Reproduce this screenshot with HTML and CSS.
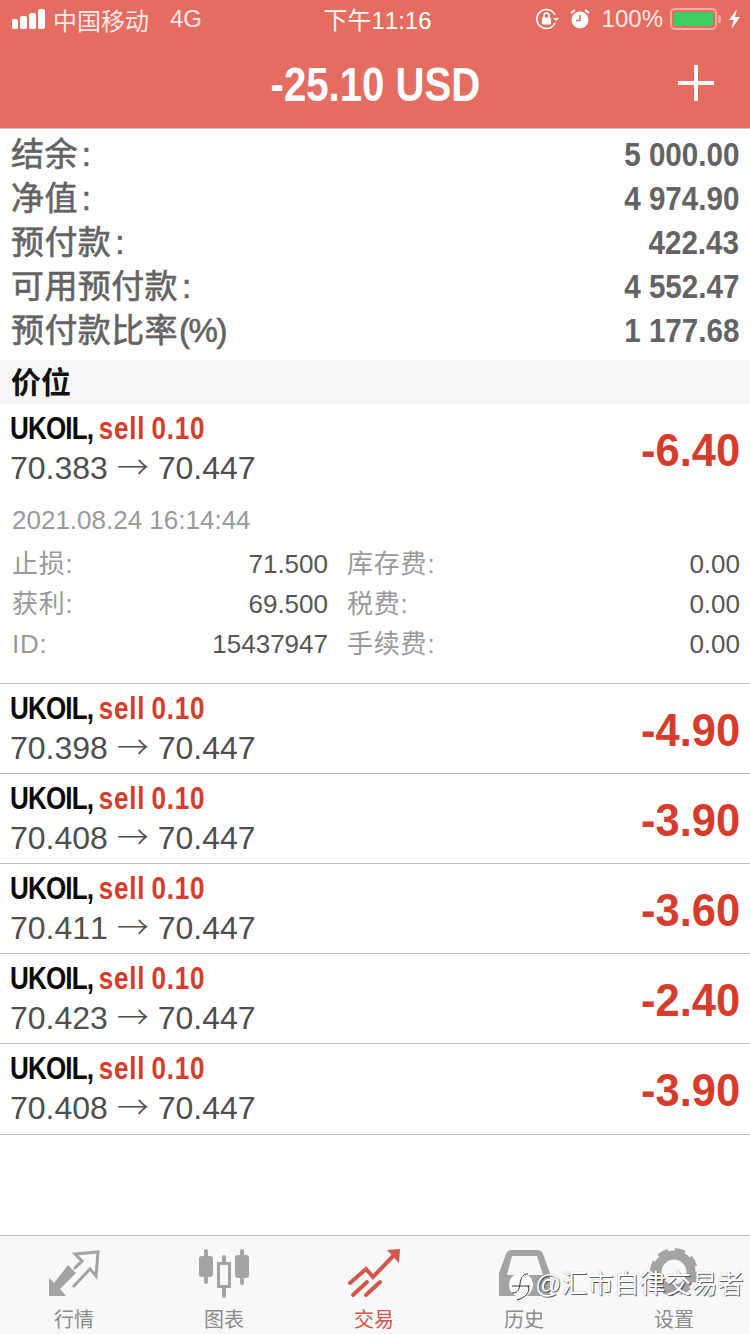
FILE: index.html
```html
<!DOCTYPE html>
<html lang="zh-CN">
<head>
<meta charset="utf-8">
<title>交易</title>
<link rel="stylesheet" href="styles.css">
</head>
<body>
<div class="screen">
  <header class="top">
    <div class="status">
      <div class="status-left">
        <svg class="signal" width="33" height="22" viewBox="0 0 33 22"><rect x="0" y="11" width="6" height="10" rx="2"/><rect x="8" y="8" width="7" height="13" rx="2"/><rect x="17" y="5" width="7" height="16" rx="2"/><rect x="26" y="1" width="7" height="20" rx="2"/></svg>
        <span class="carrier">中国移动</span><span class="net">4G</span>
      </div>
      <div class="clock">下午11:16</div>
      <div class="status-right">
        <svg width="24" height="24" viewBox="0 0 24 24"><path d="M20 8A9.500 9.500 0 1 0 20 16" fill="none" stroke="#fff" stroke-width="1.600"/><path d="M18 11h6l-3 3z" fill="#fff"/><rect x="7" y="10.500" width="9" height="7" rx="1" fill="#fff"/><path d="M9 11V8.500a2.500 2.500 0 0 1 5 0V11" fill="none" stroke="#fff" stroke-width="1.500"/></svg>
        <svg class="alarm" width="22" height="24" viewBox="0 0 22 24"><circle cx="11" cy="13" r="8.500" fill="#fff"/><path d="M11 8v5.500H7" fill="none" stroke="#e56c60" stroke-width="1.500"/><path d="M2 6l4-3M20 6l-4-3" stroke="#fff" stroke-width="2"/></svg>
        <span class="pct">100%</span>
        <span class="battery"><span class="battery-fill"></span></span>
        <svg width="13" height="22" viewBox="0 0 13 22"><path d="M9 1 1 12h4.500L3.500 21 12 9H7z" fill="#fff"/></svg>
      </div>
    </div>
    <div class="title-bar">
      <h1 class="title narrow">-25.10 USD</h1>
      <svg class="plus" width="38" height="38" viewBox="0 0 38 38"><path d="M19 1v36M1 19h36" stroke="#fff" stroke-width="4"/></svg>
    </div>
  </header>

  <section class="summary">
    <div class="sum-row"><span>结余<i class="colon">:</i></span><b class="narrow">5 000.00</b></div>
    <div class="sum-row"><span>净值<i class="colon">:</i></span><b class="narrow">4 974.90</b></div>
    <div class="sum-row"><span>预付款<i class="colon">:</i></span><b class="narrow">422.43</b></div>
    <div class="sum-row"><span>可用预付款<i class="colon">:</i></span><b class="narrow">4 552.47</b></div>
    <div class="sum-row"><span>预付款比率<i class="unit">(%)</i></span><b class="narrow">1 177.68</b></div>
  </section>

  <div class="section-head">价位</div>

  <section class="positions">
    <article class="pos open">
      <div class="pos-main">
        <div class="pos-text">
          <div class="pos-name narrow"><b>UKOIL,</b> <em>sell 0.10</em></div>
          <div class="pos-price">70.383 <span class="arrow">→</span> 70.447</div>
        </div>
        <div class="pos-pl narrow">-6.40</div>
      </div>
      <div class="pos-date">2021.08.24 16:14:44</div>
      <div class="pos-grid">
        <span class="k">止损:</span><span class="v">71.500</span><span class="k k2">库存费:</span><span class="v">0.00</span>
        <span class="k">获利:</span><span class="v">69.500</span><span class="k k2">税费:</span><span class="v">0.00</span>
        <span class="k">ID:</span><span class="v">15437947</span><span class="k k2">手续费:</span><span class="v">0.00</span>
      </div>
    </article>
    <article class="pos"><div class="pos-main"><div class="pos-text"><div class="pos-name narrow"><b>UKOIL,</b> <em>sell 0.10</em></div><div class="pos-price">70.398 <span class="arrow">→</span> 70.447</div></div><div class="pos-pl narrow">-4.90</div></div></article>
    <article class="pos"><div class="pos-main"><div class="pos-text"><div class="pos-name narrow"><b>UKOIL,</b> <em>sell 0.10</em></div><div class="pos-price">70.408 <span class="arrow">→</span> 70.447</div></div><div class="pos-pl narrow">-3.90</div></div></article>
    <article class="pos"><div class="pos-main"><div class="pos-text"><div class="pos-name narrow"><b>UKOIL,</b> <em>sell 0.10</em></div><div class="pos-price">70.411 <span class="arrow">→</span> 70.447</div></div><div class="pos-pl narrow">-3.60</div></div></article>
    <article class="pos"><div class="pos-main"><div class="pos-text"><div class="pos-name narrow"><b>UKOIL,</b> <em>sell 0.10</em></div><div class="pos-price">70.423 <span class="arrow">→</span> 70.447</div></div><div class="pos-pl narrow">-2.40</div></div></article>
    <article class="pos"><div class="pos-main"><div class="pos-text"><div class="pos-name narrow"><b>UKOIL,</b> <em>sell 0.10</em></div><div class="pos-price">70.408 <span class="arrow">→</span> 70.447</div></div><div class="pos-pl narrow">-3.90</div></div></article>
  </section>

  <nav class="tabs">
    <div class="tab">
      <svg width="50" height="50" viewBox="0 0 50 50"><path d="M0 29 5 34 19 16 27 24 11 40 17 47H0z" fill="#a3a3a3"/><path d="M24 38 41 20 47 27 49 3 26 5 33 12 25 20" fill="none" stroke="#a3a3a3" stroke-width="3"/></svg>
      <span>行情</span>
    </div>
    <div class="tab">
      <svg width="50" height="50" viewBox="0 0 50 50"><g fill="#a3a3a3"><rect x="0" y="7" width="14" height="21" rx="3"/><rect x="5" y="0" width="4" height="35" rx="2"/><rect x="36" y="6" width="14" height="23" rx="3"/><rect x="41" y="0" width="4" height="36" rx="2"/><rect x="23" y="6" width="4" height="43" rx="2"/></g><rect x="19.500" y="14.500" width="11" height="23" fill="#f8f8f8" stroke="#a3a3a3" stroke-width="3"/></svg>
      <span>图表</span>
    </div>
    <div class="tab active">
      <svg width="50" height="50" viewBox="0 0 50 50"><g fill="none" stroke="#d2564a" stroke-width="4" stroke-linecap="round"><path d="M1 34 17 20 24 28 47 4"/><path d="M4 46 18 33"/><path d="M17 46 31 33"/></g><path d="M38 1 51 0 50 14z" fill="#d2564a"/></svg>
      <span>交易</span>
    </div>
    <div class="tab">
      <svg width="51" height="50" viewBox="0 0 51 50"><path d="M0 47V24L7 5Q9 1 13 1H38Q42 1 44 5L51 24V47z" fill="#a3a3a3"/><path d="M8 26 13 7H38L44 26z" fill="#f8f8f8"/></svg>
      <span>历史</span>
    </div>
    <div class="tab">
      <svg class="gear" width="50" height="50" viewBox="0 0 50 50"><circle cx="25" cy="23" r="17" fill="none" stroke="#a3a3a3" stroke-width="9"/><circle cx="25" cy="23" r="22" fill="none" stroke="#a3a3a3" stroke-width="4" stroke-dasharray="10.500 6.780"/></svg>
      <span>设置</span>
    </div>
    <div class="mark">
      <svg class="mark-logo" width="27" height="30" viewBox="0 0 27 30"><circle cx="13" cy="13" r="12" fill="#fff"/><path d="M20 2C14 2 13 6 12 12S10 21 4 21M4 14H22M20 14C23 20 17 26 9 28" fill="none" stroke="#333" stroke-width="1"/></svg>
      <span class="mark-text">@汇市自律交易者</span>
    </div>
  </nav>
</div>
</body>
</html>
```
FILE: styles.css
```css
* { box-sizing: border-box; margin: 0; padding: 0; }
html, body { background: #fff; }
body {
  width: 750px;
  height: 1334px;
  overflow: hidden;
  font-family: "Liberation Sans", "Noto Sans CJK SC", sans-serif;
  font-kerning: none;
}
.screen { width: 750px; height: 1334px; display: flex; flex-direction: column; }

/* condensed bold numerals */
.narrow { font-weight: 700; display: inline-block; transform-origin: right center; transform: scaleX(.87); }

/* header */
.top { background: #e56c60; height: 129px; border-bottom: 1px solid #c9c5c3; color: #fff; flex: none; }
.status { height: 42px; display: flex; align-items: center; justify-content: space-between; padding: 0 9px 4px 12px; position: relative; }
.status-left { display: flex; align-items: center; gap: 8px; }
.signal { fill: #fff; }
.carrier { font-size: 24px; opacity: .85; }
.net { font-size: 24px; margin-left: 13px; opacity: .85; }
.clock { position: absolute; left: 5px; right: 0; top: 6px; text-align: center; font-size: 24px; line-height: 30px; }
.status-right { display: flex; align-items: center; gap: 10px; }
.pct { font-size: 24px; opacity: .85; margin-left: 1px; margin-right: -1px; }
.battery { width: 47px; height: 22px; border: 2px solid #f3aca4; border-radius: 5px; padding: 2px; margin-left: -2px; margin-right: 1px; position: relative; display: block; }
.battery::after { content: ""; position: absolute; right: -6px; top: 5px; width: 3px; height: 8px; background: #f3aca4; border-radius: 0 2px 2px 0; }
.battery-fill { display: block; height: 100%; background: #3fcd5f; border-radius: 2px; }
.title-bar { height: 86px; display: flex; align-items: center; justify-content: center; position: relative; }
.title { font-size: 48px; line-height: 1; transform-origin: center; transform: scaleX(.836); }
.plus { position: absolute; right: 35px; top: 22px; }

/* account summary */
.summary { padding: 3px 11px 0 11px; height: 231px; flex: none; }
.sum-row { height: 44px; display: flex; align-items: center; justify-content: space-between; color: #636363; font-size: 33px; }
.sum-row span { -webkit-text-stroke: .6px #636363; margin-top: -4px; letter-spacing: .4px; }
.sum-row b { font-size: 34px; }
.colon { font-style: normal; margin-left: 4px; }
.unit { font-style: normal; letter-spacing: -1.4px; margin-left: 1px; }

.section-head { height: 44px; background: #f6f6f6; padding-left: 11px; font-size: 30px; line-height: 46px; color: #111; font-weight: 700; flex: none; }

/* positions */
.positions { flex: 1; }
.pos { border-bottom: 1px solid #bdbdbd; height: 90px; padding: 0 10px; }
.pos:last-child { height: 91px; }
.pos.open { height: 280px; }
.pos-main { height: 90px; display: flex; align-items: center; justify-content: space-between; }
.pos-text { display: flex; flex-direction: column; margin-top: -4px; }
.pos-name { font-size: 31px; line-height: 40px; height: 40px; margin-top: 2px; transform-origin: left center; transform: scaleX(.84); word-spacing: -2px; white-space: nowrap; }
.pos-name b { color: #0a0a0a; letter-spacing: -1px; }
.pos-name em { color: #d53c2c; font-style: normal; letter-spacing: .9px; }
.pos-price { font-size: 32px; line-height: 40px; margin-top: -4px; color: #4e4e4e; }
.arrow { font-family: "Noto Sans CJK SC", sans-serif; font-weight: 300; }
.pos-pl { font-size: 47px; color: #d53c2c; transform: scaleX(.925); }
.pos-date { font-size: 26px; color: #999; height: 40px; line-height: 40px; margin-top: 6px; margin-left: 2px; }
.pos-grid { display: grid; grid-template-columns: 120px 196px 200px 1fr; margin-top: 4px; margin-left: 2px; }
.k, .v { height: 40px; line-height: 40px; font-size: 26px; }
.k { color: #999; letter-spacing: .8px; }
.k2 { padding-left: 19px; }
.v { color: #555; text-align: right; }

/* tab bar */
.tabs { height: 99px; flex: none; background: #f8f8f8; border-top: 1px solid #bdbdbd; display: grid; grid-template-columns: repeat(5, 150px); position: relative; }
.tab { display: flex; flex-direction: column; align-items: center; padding-top: 13px; color: #8b8b8b; font-size: 20px; line-height: 24px; gap: 9px; margin-left: -2px; }
.tab svg { flex: none; overflow: visible; }
.tab.active { color: #d2564a; }

/* author credit laid over the tab bar */
.mark { position: absolute; left: 508px; top: 36px; display: flex; align-items: center; gap: 0; color: #fff; white-space: nowrap; }
.mark-logo { flex: none; }
.mark-text { font-size: 26px; line-height: 30px; text-shadow: 1px 1px 0 rgba(50,50,50,.75), 0 0 1px rgba(50,50,50,.5); margin-top: -6px; }
```
